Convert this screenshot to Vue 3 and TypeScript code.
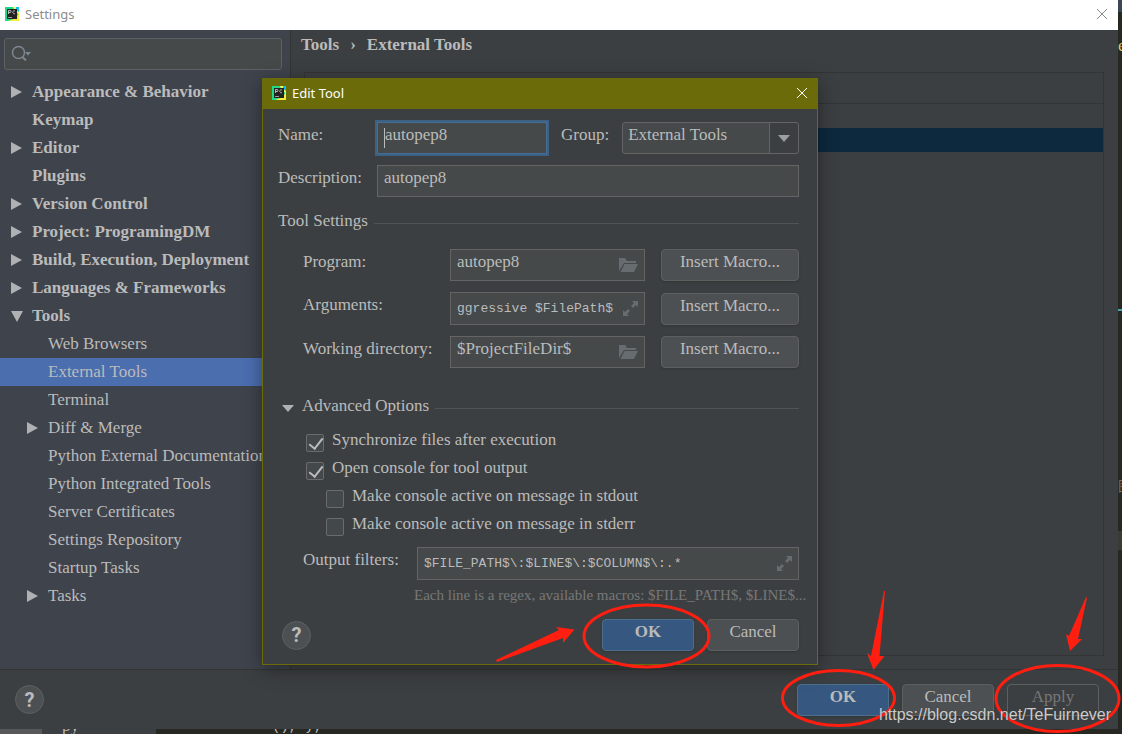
<script setup lang="ts">
import { ref } from 'vue'

interface TreeItem {
  label: string
  level: 1 | 2
  arrow?: 'closed' | 'open'
}

const tree: TreeItem[] = [
  { label: 'Appearance & Behavior', level: 1, arrow: 'closed' },
  { label: 'Keymap', level: 1 },
  { label: 'Editor', level: 1, arrow: 'closed' },
  { label: 'Plugins', level: 1 },
  { label: 'Version Control', level: 1, arrow: 'closed' },
  { label: 'Project: ProgramingDM', level: 1, arrow: 'closed' },
  { label: 'Build, Execution, Deployment', level: 1, arrow: 'closed' },
  { label: 'Languages & Frameworks', level: 1, arrow: 'closed' },
  { label: 'Tools', level: 1, arrow: 'open' },
  { label: 'Web Browsers', level: 2 },
  { label: 'External Tools', level: 2 },
  { label: 'Terminal', level: 2 },
  { label: 'Diff & Merge', level: 2, arrow: 'closed' },
  { label: 'Python External Documentation', level: 2 },
  { label: 'Python Integrated Tools', level: 2 },
  { label: 'Server Certificates', level: 2 },
  { label: 'Settings Repository', level: 2 },
  { label: 'Startup Tasks', level: 2 },
  { label: 'Tasks', level: 2, arrow: 'closed' },
]

const selected = ref('External Tools')
const search = ref('')
const name = ref('autopep8')
const group = ref('External Tools')
const description = ref('autopep8')
const outputFilters = ref('$FILE_PATH$\\:$LINE$\\:$COLUMN$\\:.*')

const fields = ref([
  { id: 'program', label: 'Program:', value: 'autopep8', icon: 'folder', mono: false },
  { id: 'arguments', label: 'Arguments:', value: 'ggressive $FilePath$', icon: 'expand', mono: true },
  { id: 'workdir', label: 'Working directory:', value: '$ProjectFileDir$', icon: 'folder', mono: false },
])

const options = ref([
  { id: 'sync', label: 'Synchronize files after execution', checked: true, nested: false },
  { id: 'console', label: 'Open console for tool output', checked: true, nested: false },
  { id: 'stdout', label: 'Make console active on message in stdout', checked: false, nested: true },
  { id: 'stderr', label: 'Make console active on message in stderr', checked: false, nested: true },
])
</script>

<template>
  <div class="screen">
    <svg class="defs" aria-hidden="true">
      <symbol id="logo" viewBox="0 0 14 14">
        <rect width="14" height="14" fill="#21d789" />
        <path d="M8 0h6v7l-4-2z" fill="#fcf84a" />
        <path d="M11 0h3v5l-3-2z" fill="#07c3f2" />
        <path d="M14 6v8H3l8-3z" fill="#f5ee3c" />
        <rect x="2" y="2" width="10" height="10" fill="#222" />
        <path d="M3.500 7V3.500h1.500a1 1 0 0 1 0 2H3.500M10 4a1.500 1.500 0 1 0 0 2.600" fill="none" stroke="#bbb" />
        <path d="M3 10.500h4" stroke="#999" />
      </symbol>
      <symbol id="folder" viewBox="0 0 19 15">
        <path d="M0 0h6l2 3h9v2H5L0 13z" fill="#666c70" />
        <path d="M5.500 6H19l-4 8H1.500z" fill="#666c70" />
      </symbol>
      <symbol id="expand" viewBox="0 0 15 15">
        <path d="M9 0h6v6l-2-2-3 3-2-2 3-3zM0 9l2 2 3-3 2 2-3 3 2 2H0z" fill="#666c70" />
      </symbol>
    </svg>

    <main class="window">
      <header class="titlebar">
        <svg class="logo"><use href="#logo" /></svg>
        <span>Settings</span>
        <button class="close" aria-label="Close settings">
          <svg width="12" height="12"><path d="M1 1l10 10M11 1L1 11" stroke="#888" fill="none" /></svg>
        </button>
      </header>

      <div class="body">
        <nav class="sidebar">
          <label class="search">
            <svg width="22" height="18">
              <circle cx="7.500" cy="7.500" r="6" fill="none" stroke="#7d8790" stroke-width="1.500" />
              <path d="M11.500 12l3.500 3.500" stroke="#7d8790" stroke-width="2" />
              <path d="M14 7h6l-3 3.500z" fill="#7d8790" />
            </svg>
            <input v-model="search" type="text" aria-label="Search settings" />
          </label>
          <ul class="tree">
            <li v-for="item in tree" :key="item.label">
              <button
                class="node"
                :class="['level' + item.level, { selected: item.label === selected }]"
                @click="selected = item.label"
              >
                <span class="twisty">
                  <svg v-if="item.arrow === 'closed'" width="11" height="12"><path d="M0 0l11 6L0 12z" fill="#afb1b3" /></svg>
                  <svg v-if="item.arrow === 'open'" width="12" height="11"><path d="M0 0h12L6 11z" fill="#afb1b3" /></svg>
                </span>
                <span>{{ item.label }}</span>
              </button>
            </li>
          </ul>
        </nav>

        <section class="content">
          <h1 class="crumbs"><span>Tools</span><span class="sep">›</span><span>External Tools</span></h1>
          <div class="panel">
            <div class="toolbar"></div>
            <div class="chosen"></div>
          </div>
        </section>
      </div>

      <footer class="bar">
        <button class="help" aria-label="Help">?</button>
        <div class="actions">
          <button class="btn primary">OK</button>
          <button class="btn">Cancel</button>
          <button class="btn" disabled>Apply</button>
        </div>
      </footer>
    </main>

    <aside class="edge">
      <span class="edge-tab"></span>
      <span class="edge-key">e</span>
      <span class="edge-mark"></span>
      <span class="edge-text">图</span>
      <span class="edge-line"></span>
    </aside>
    <div class="strip">
      <span class="tab dim"></span>
      <span class="tab">py</span>
      <span class="code">(), y,</span>
    </div>

    <form class="dialog" @submit.prevent>
      <header class="dialog-title">
        <svg class="logo"><use href="#logo" /></svg>
        <span>Edit Tool</span>
        <button type="button" class="close" aria-label="Close dialog">
          <svg width="12" height="12"><path d="M1 1l10 10M11 1L1 11" stroke="#fff" fill="none" /></svg>
        </button>
      </header>

      <div class="form">
        <div class="row">
          <label class="label key" for="name">Name:</label>
          <div class="field focused"><span class="caret"></span><input id="name" v-model="name" type="text" /></div>
          <label class="label group-label" for="group">Group:</label>
          <div class="combo">
            <select id="group" v-model="group"><option>External Tools</option></select>
            <svg width="12" height="7"><path d="M0 0h12L6 7z" fill="#9c9fa1" /></svg>
          </div>
        </div>
        <div class="row">
          <label class="label key" for="description">Description:</label>
          <div class="field"><input id="description" v-model="description" type="text" /></div>
        </div>

        <h2 class="section"><span>Tool Settings</span></h2>

        <div v-for="f in fields" :key="f.id" class="row indent">
          <label class="label setting" :for="f.id">{{ f.label }}</label>
          <div class="field" :class="{ mono: f.mono }">
            <input :id="f.id" v-model="f.value" type="text" />
            <svg v-if="f.icon === 'folder'" class="folder"><use href="#folder" /></svg>
            <svg v-else class="expand"><use href="#expand" /></svg>
          </div>
          <button type="button" class="btn macro">Insert Macro...</button>
        </div>

        <h2 class="section advanced">
          <svg width="12" height="7"><path d="M0 0h12L6 7z" fill="#afb1b3" /></svg>
          <span>Advanced Options</span>
        </h2>

        <div class="options">
          <div v-for="o in options" :key="o.id" class="option" :class="{ nested: o.nested }">
            <input :id="o.id" v-model="o.checked" type="checkbox" />
            <label class="label" :for="o.id">{{ o.label }}</label>
          </div>
        </div>

        <div class="row indent filters">
          <label class="label filters-label" for="filters">Output filters:</label>
          <div class="field mono">
            <input id="filters" v-model="outputFilters" type="text" />
            <svg class="expand"><use href="#expand" /></svg>
          </div>
        </div>
        <p class="hint">Each line is a regex, available macros: $FILE_PATH$, $LINE$...</p>

        <footer class="dialog-footer">
          <button type="button" class="help" aria-label="Help">?</button>
          <div class="actions">
            <button type="button" class="btn primary">OK</button>
            <button type="button" class="btn">Cancel</button>
          </div>
        </footer>
      </div>
    </form>

    <svg class="marks" width="1122" height="734" aria-hidden="true">
      <g fill="none" stroke="#ff1e10" stroke-width="3">
        <ellipse cx="646.500" cy="636" rx="62.500" ry="31" />
        <ellipse cx="838.500" cy="698" rx="56" ry="27.500" />
        <ellipse cx="1057.500" cy="698.500" rx="61.500" ry="33" />
      </g>
      <g fill="#ff1e10">
        <path d="M496 660l63-30-3-3 18.500 2.500L563 643v-5l-66 24z" />
        <path d="M884 591l-13 65-4-3 6.500 17L884.500 656h-5l5.500-65z" />
        <path d="M1086 597l-17 39-3-2 4 17 12-12h-4l9-41z" />
      </g>
    </svg>
    <div class="watermark">https://blog.csdn.net/TeFuirnever</div>
  </div>
</template>

<style>
body {
  background: #272822;
}
</style>

<style scoped>
* {
  box-sizing: border-box;
}
.screen {
  position: relative;
  display: grid;
  grid-template-columns: 1fr 4px;
  grid-template-rows: 1fr 5px;
  min-height: 100vh;
  overflow: hidden;
  background: #272822;
  color: #bbb;
  font: 17px/20px "Liberation Serif", serif;
}
button,
input,
select {
  margin: 0;
  padding: 0;
  border: 0;
  background: none;
  color: inherit;
  font: inherit;
  outline: none;
}
h1,
h2,
p,
ul {
  margin: 0;
  padding: 0;
  font-size: inherit;
  font-weight: inherit;
  list-style: none;
}
svg {
  display: block;
  flex: none;
}
.defs {
  position: absolute;
  width: 0;
  height: 0;
}
.window {
  display: flex;
  flex-direction: column;
  min-width: 0;
  background: #3c3f41;
}
.titlebar,
.dialog-title {
  display: flex;
  align-items: center;
  padding-bottom: 2px;
  font: 13px/20px "Noto Sans", sans-serif;
}
.titlebar {
  height: 30px;
  padding-right: 10px;
  padding-left: 5px;
  background: #fff;
  color: #8c8c8c;
}
.logo {
  width: 14px;
  height: 14px;
  margin-right: 6px;
}
.close {
  margin-left: auto;
}
.body {
  display: flex;
  flex: 1;
}
.sidebar {
  width: 291px;
  flex: none;
  padding-top: 8px;
  border-right: 1px solid #323436;
  background: #3f434c;
}
.search {
  display: flex;
  align-items: center;
  height: 32px;
  margin: 0 8px 8px 4px;
  padding: 0 6px;
  border: 1px solid #5e6163;
  border-radius: 3px;
  background: #45494a;
}
.search input {
  flex: 1;
  min-width: 0;
}
.node {
  display: flex;
  align-items: center;
  width: 100%;
  height: 28px;
  white-space: nowrap;
  overflow: hidden;
  text-align: left;
}
.level1 {
  padding-left: 11px;
  font-weight: bold;
}
.level2 {
  padding-left: 27px;
}
.selected {
  background: #4b6eaf;
}
.twisty {
  width: 21px;
  flex: none;
}
.content {
  display: flex;
  flex: 1;
  flex-direction: column;
  padding: 5px 14px 13px 10px;
}
.crumbs {
  display: flex;
  gap: 11px;
  margin-bottom: 17px;
  font-weight: bold;
}
.panel {
  flex: 1;
  margin-left: 3px;
  border: 1px solid #323436;
}
.toolbar {
  height: 31px;
  border-bottom: 1px solid #323436;
}
.chosen {
  height: 24px;
  margin-top: 24px;
  background: #0d293e;
}
.bar {
  display: flex;
  align-items: center;
  justify-content: space-between;
  height: 60px;
  padding: 0 19px 0 15px;
  border-top: 1px solid #323436;
}
.actions {
  display: flex;
  gap: 13px;
}
.btn {
  width: 92px;
  height: 32px;
  padding-bottom: 6px;
  border: 1px solid #5e6060;
  border-radius: 4px;
  background: #4c5052;
  box-shadow: 0 1px 2px #333638;
}
.primary {
  border-color: #4c708c;
  background: #365880;
  font-weight: bold;
}
.btn:disabled {
  background: none;
  color: #777;
  box-shadow: none;
}
.help {
  width: 29px;
  height: 29px;
  border: 1px solid #5e6162;
  border-radius: 50%;
  background: #4c5052;
  font: bold 20px/20px Roboto, sans-serif;
}
.edge {
  display: flex;
  flex-direction: column;
  overflow: hidden;
}
.edge-tab {
  height: 12px;
  background: #3b4754;
}
.edge-key {
  margin-top: 24px;
  color: #d9c95c;
}
.edge-mark {
  height: 2px;
  margin-top: 253px;
  background: #4aa3b0;
}
.edge-text {
  margin-top: 164px;
  color: #75715e;
  font: 14px/20px "Noto Sans CJK SC", sans-serif;
}
.edge-line {
  height: 19px;
  margin-top: 36px;
  background: #3a3b32;
}
.strip {
  display: flex;
  align-items: flex-end;
  grid-column: 1 / 3;
  overflow: hidden;
}
.tab {
  width: 114px;
  padding-left: 20px;
  background: #3c3f41;
  line-height: 16px;
}
.dim {
  width: 42px;
  height: 5px;
  background: #57585a;
}
.code {
  padding-left: 116px;
  font: 14px/16px "Liberation Mono", monospace;
}

.dialog {
  position: absolute;
  top: 78px;
  left: 262px;
  width: 556px;
  border: 1px solid #6b6b0a;
  background: #3c3f41;
  box-shadow: 0 4px 18px rgba(0, 0, 0, 0.4);
}
.dialog-title {
  height: 30px;
  padding-right: 9px;
  padding-left: 9px;
  background: #6b6b0a;
  color: #fff;
}
.form {
  display: flex;
  flex-direction: column;
  gap: 11px;
  padding: 13px 18px 13px 15px;
}
.row {
  display: flex;
  align-items: center;
}
.label {
  padding-bottom: 7px;
  white-space: nowrap;
}
.key {
  width: 99px;
}
.field {
  position: relative;
  display: flex;
  align-items: center;
  flex: 1;
  min-width: 0;
  height: 32px;
  padding: 0 6px;
  border: 1px solid #646464;
  background: #45494a;
}
.field input {
  flex: 1;
  min-width: 0;
  padding-bottom: 7px;
}
.field.mono {
  height: 33px;
}
.focused {
  flex: none;
  width: 170px;
  border-color: #466d94;
  box-shadow: 0 0 0 2px #3d6185;
}
.caret {
  width: 1px;
  height: 20px;
  background: #bbb;
}
.group-label {
  margin: 0 13px 0 14px;
}
.combo {
  position: relative;
  flex: 1;
}
.combo select {
  display: block;
  width: 100%;
  height: 32px;
  padding: 0 0 7px 5px;
  border: 1px solid #646464;
  border-radius: 3px;
  background: linear-gradient(to left, #3c3f41 28px, #646464 28px, #646464 29px, #45494a 29px);
  appearance: none;
}
.combo svg {
  position: absolute;
  top: 13px;
  right: 9px;
  pointer-events: none;
}
.section {
  display: flex;
  align-items: center;
  height: 30px;
}
.section span {
  padding-bottom: 4px;
}
.section::after {
  content: "";
  flex: 1;
  height: 1px;
  margin-left: 6px;
  background: #515355;
}
.indent {
  padding-left: 25px;
}
.setting {
  width: 147px;
}
.macro {
  width: 138px;
  margin-left: 16px;
}
.folder {
  width: 19px;
  height: 15px;
}
.expand {
  width: 15px;
  height: 15px;
}
.mono input {
  padding-bottom: 0;
  font: 13px/20px "Liberation Mono", monospace;
}
.advanced {
  margin-top: 14px;
  padding-left: 4px;
}
.advanced svg {
  margin-right: 8px;
}
.options {
  display: flex;
  flex-direction: column;
  margin-top: -5px;
}
.option {
  display: flex;
  align-items: center;
  gap: 8px;
  height: 28px;
  padding-left: 28px;
}
.nested {
  padding-left: 48px;
}
.option input {
  width: 18px;
  height: 18px;
  border: 1px solid #6b6b6b;
  border-radius: 2px;
  background: #43494a;
  appearance: none;
}
.option input:checked::before {
  content: "";
  display: block;
  width: 6px;
  height: 12px;
  margin-left: 5px;
  border: solid #bbb;
  border-width: 0 2px 2px 0;
  transform: rotate(38deg);
}
.filters {
  margin-top: -5px;
}
.filters-label {
  width: 114px;
}
.hint {
  margin: -6px 0 0 136px;
  color: #777;
  font-size: 15px;
  white-space: nowrap;
}
.dialog-footer {
  display: flex;
  align-items: center;
  justify-content: space-between;
  margin-top: 3px;
  padding-left: 4px;
}
.marks {
  position: absolute;
  top: 0;
  left: 0;
  pointer-events: none;
}
.watermark {
  position: absolute;
  right: 11px;
  bottom: 9px;
  color: rgba(255, 255, 255, 0.75);
  font: 16px/20px "Liberation Sans", sans-serif;
  text-shadow: 0 0 1px #333;
}
</style>
